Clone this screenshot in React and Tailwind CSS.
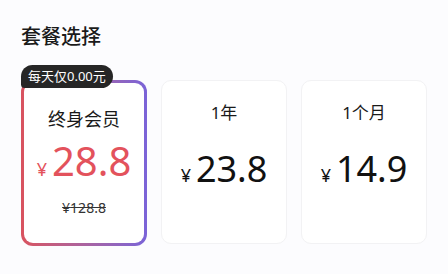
import React from 'react';

const plans = [
  { id: 'life', name: '终身会员', price: '28.8', origin: '128.8', badge: '每天仅0.00元', active: true },
  { id: 'year', name: '1年', price: '23.8' },
  { id: 'month', name: '1个月', price: '14.9' },
];

const App = () => {
  return (
    <div className="w-[448px] h-[274px] bg-[#fcfcfe] px-[21px] pt-[22px] overflow-hidden" style={{ fontFamily: '"Noto Sans", "Noto Sans CJK SC", sans-serif' }}>
      <h2 className="text-[20px] leading-[29px] font-medium text-[#1a1a1a]">套餐选择</h2>

      <div className="grid grid-cols-3 gap-[14px] mt-[29px]">
        {plans.map(p => (
          p.active ? (
            <div key={p.id} className="relative h-[166px] rounded-[12px] p-[3px] bg-gradient-to-r from-[#d9525e] to-[#7a63d8]">
              <div className="h-full w-full rounded-[9px] bg-white flex flex-col items-center pt-[23px]">
                <span className="text-[18px] leading-[26px] text-[#1a1a1a]">{p.name}</span>
                <div className="flex items-baseline text-[#e3525c] mt-[5px]">
                  <span className="text-[18px] mr-[5px]">¥</span>
                  <span className="text-[40px] leading-[48px]">{p.price}</span>
                </div>
                <span className="text-[14px] text-[#333] line-through mt-[12px]">¥{p.origin}</span>
              </div>
              <span className="absolute left-0 top-[-15px] h-[23px] px-[7px] flex items-center rounded-[12px] rounded-bl-[4px] bg-[#262626] text-white text-[13px] leading-none">{p.badge}</span>
            </div>
          ) : (
            <div key={p.id} className="h-[164px] rounded-[10px] bg-white border border-[#f2f2f4] flex flex-col items-center pt-[20px]">
              <span className="text-[17px] leading-[24px] text-[#1a1a1a]">{p.name}</span>
              <div className="flex items-baseline text-[#111] mt-[23px]">
                <span className="text-[18px] mr-[5px]">¥</span>
                <span className="text-[36px] leading-[42px]">{p.price}</span>
              </div>
            </div>
          )
        ))}
      </div>
    </div>
  );
};

export default App;
